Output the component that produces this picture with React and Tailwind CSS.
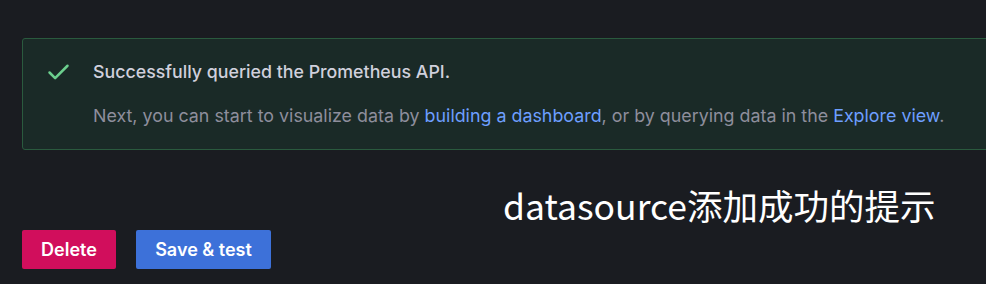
import { Check } from 'lucide-react'

const App = () => {
  return (
    <div className="min-h-[284px] w-[986px] overflow-hidden bg-[#1a1c21] pt-[38px] pl-[22px] font-['Inter','Liberation_Sans',sans-serif]">
      {/* Alert */}
      <div className="-mr-[4px] flex items-start rounded-[3px] border border-[#2a5a3e] bg-[#1a2a27] pt-[20px] pb-[20px] pl-[22px]">
        <div className="flex h-[26px] w-[27px] shrink-0 items-center">
          <Check className="h-[27px] w-[27px] text-[#6ccf8e]" strokeWidth={2.2} />
        </div>
        <div className="ml-[21px] flex flex-col gap-[18px]">
          <p className="text-[17.8px] leading-[26px] font-medium text-[#d0d0dc]">
            Successfully queried the Prometheus API.
          </p>
          <p className="text-[17.85px] leading-[26px] text-[#8e8e9c]">
            Next, you can start to visualize data by{' '}
            <a className="text-[#6e9fff]">building a dashboard</a>, or by querying data in the{' '}
            <a className="text-[#6e9fff]">Explore view</a>.
          </p>
        </div>
      </div>

      {/* Annotation */}
      <div className="mt-[34px] pl-[481px]">
        <span className="text-[35.5px] leading-[42px] text-white font-['Noto_Sans_CJK_SC',sans-serif]">
          datasource添加成功的提示
        </span>
      </div>

      {/* Buttons */}
      <div className="mt-[4px] flex gap-5">
        <button
          type="button"
          className="h-[39px] w-[94px] rounded-[2px] bg-[#d10e5c] text-[18px] font-semibold text-white"
        >
          Delete
        </button>
        <button
          type="button"
          className="h-[39px] w-[135px] rounded-[2px] bg-[#3d71d9] text-[18px] font-semibold text-white"
        >
          Save &amp; test
        </button>
      </div>
    </div>
  )
}

export default App
